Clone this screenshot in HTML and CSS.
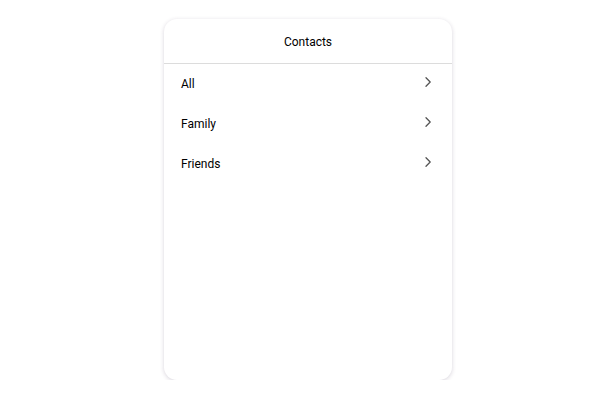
FILE: index.html
```html
<!DOCTYPE html>
<html>
<head>
<meta charset="utf-8">
<link rel="stylesheet" href="styles.css">
</head>
<body>
<div class="card">
  <div class="header">Contacts</div>
  <ul class="list">
    <li class="row"><span class="label">All</span><svg class="chev" width="8" height="12" viewBox="0 0 8 12"><path d="M2 1.8 L6.2 6 L2 10.2" fill="none" stroke="#555" stroke-width="1.3" stroke-linecap="round" stroke-linejoin="round"/></svg></li>
    <li class="row"><span class="label">Family</span><svg class="chev" width="8" height="12" viewBox="0 0 8 12"><path d="M2 1.8 L6.2 6 L2 10.2" fill="none" stroke="#555" stroke-width="1.3" stroke-linecap="round" stroke-linejoin="round"/></svg></li>
    <li class="row"><span class="label">Friends</span><svg class="chev" width="8" height="12" viewBox="0 0 8 12"><path d="M2 1.8 L6.2 6 L2 10.2" fill="none" stroke="#555" stroke-width="1.3" stroke-linecap="round" stroke-linejoin="round"/></svg></li>
  </ul>
</div>
</body>
</html>
```
FILE: styles.css
```css
html, body {
  margin: 0;
  padding: 0;
  background: #fff;
  font-family: Roboto, "Liberation Sans", sans-serif;
  color: #000;
}
body {
  padding-top: 19px;
}
.card {
  width: 288px;
  height: 361px;
  margin: 0 auto;
  position: relative;
  left: 8px;
  background: #fff;
  border-radius: 13px;
  box-shadow: 0 1px 4px rgba(60, 40, 80, 0.2);
  overflow: hidden;
}
.header {
  height: 44px;
  line-height: 46px;
  text-align: center;
  font-size: 12px;
  border-bottom: 1px solid #dcdcdc;
}
.list {
  list-style: none;
  margin: 0;
  padding: 0;
}
.row {
  height: 40px;
  display: flex;
  align-items: center;
  justify-content: space-between;
  padding: 0 20px 0 17px;
  font-size: 12px;
}
.label {
  margin-top: -1px;
}
.chev {
  margin-top: -4px;
}
```
